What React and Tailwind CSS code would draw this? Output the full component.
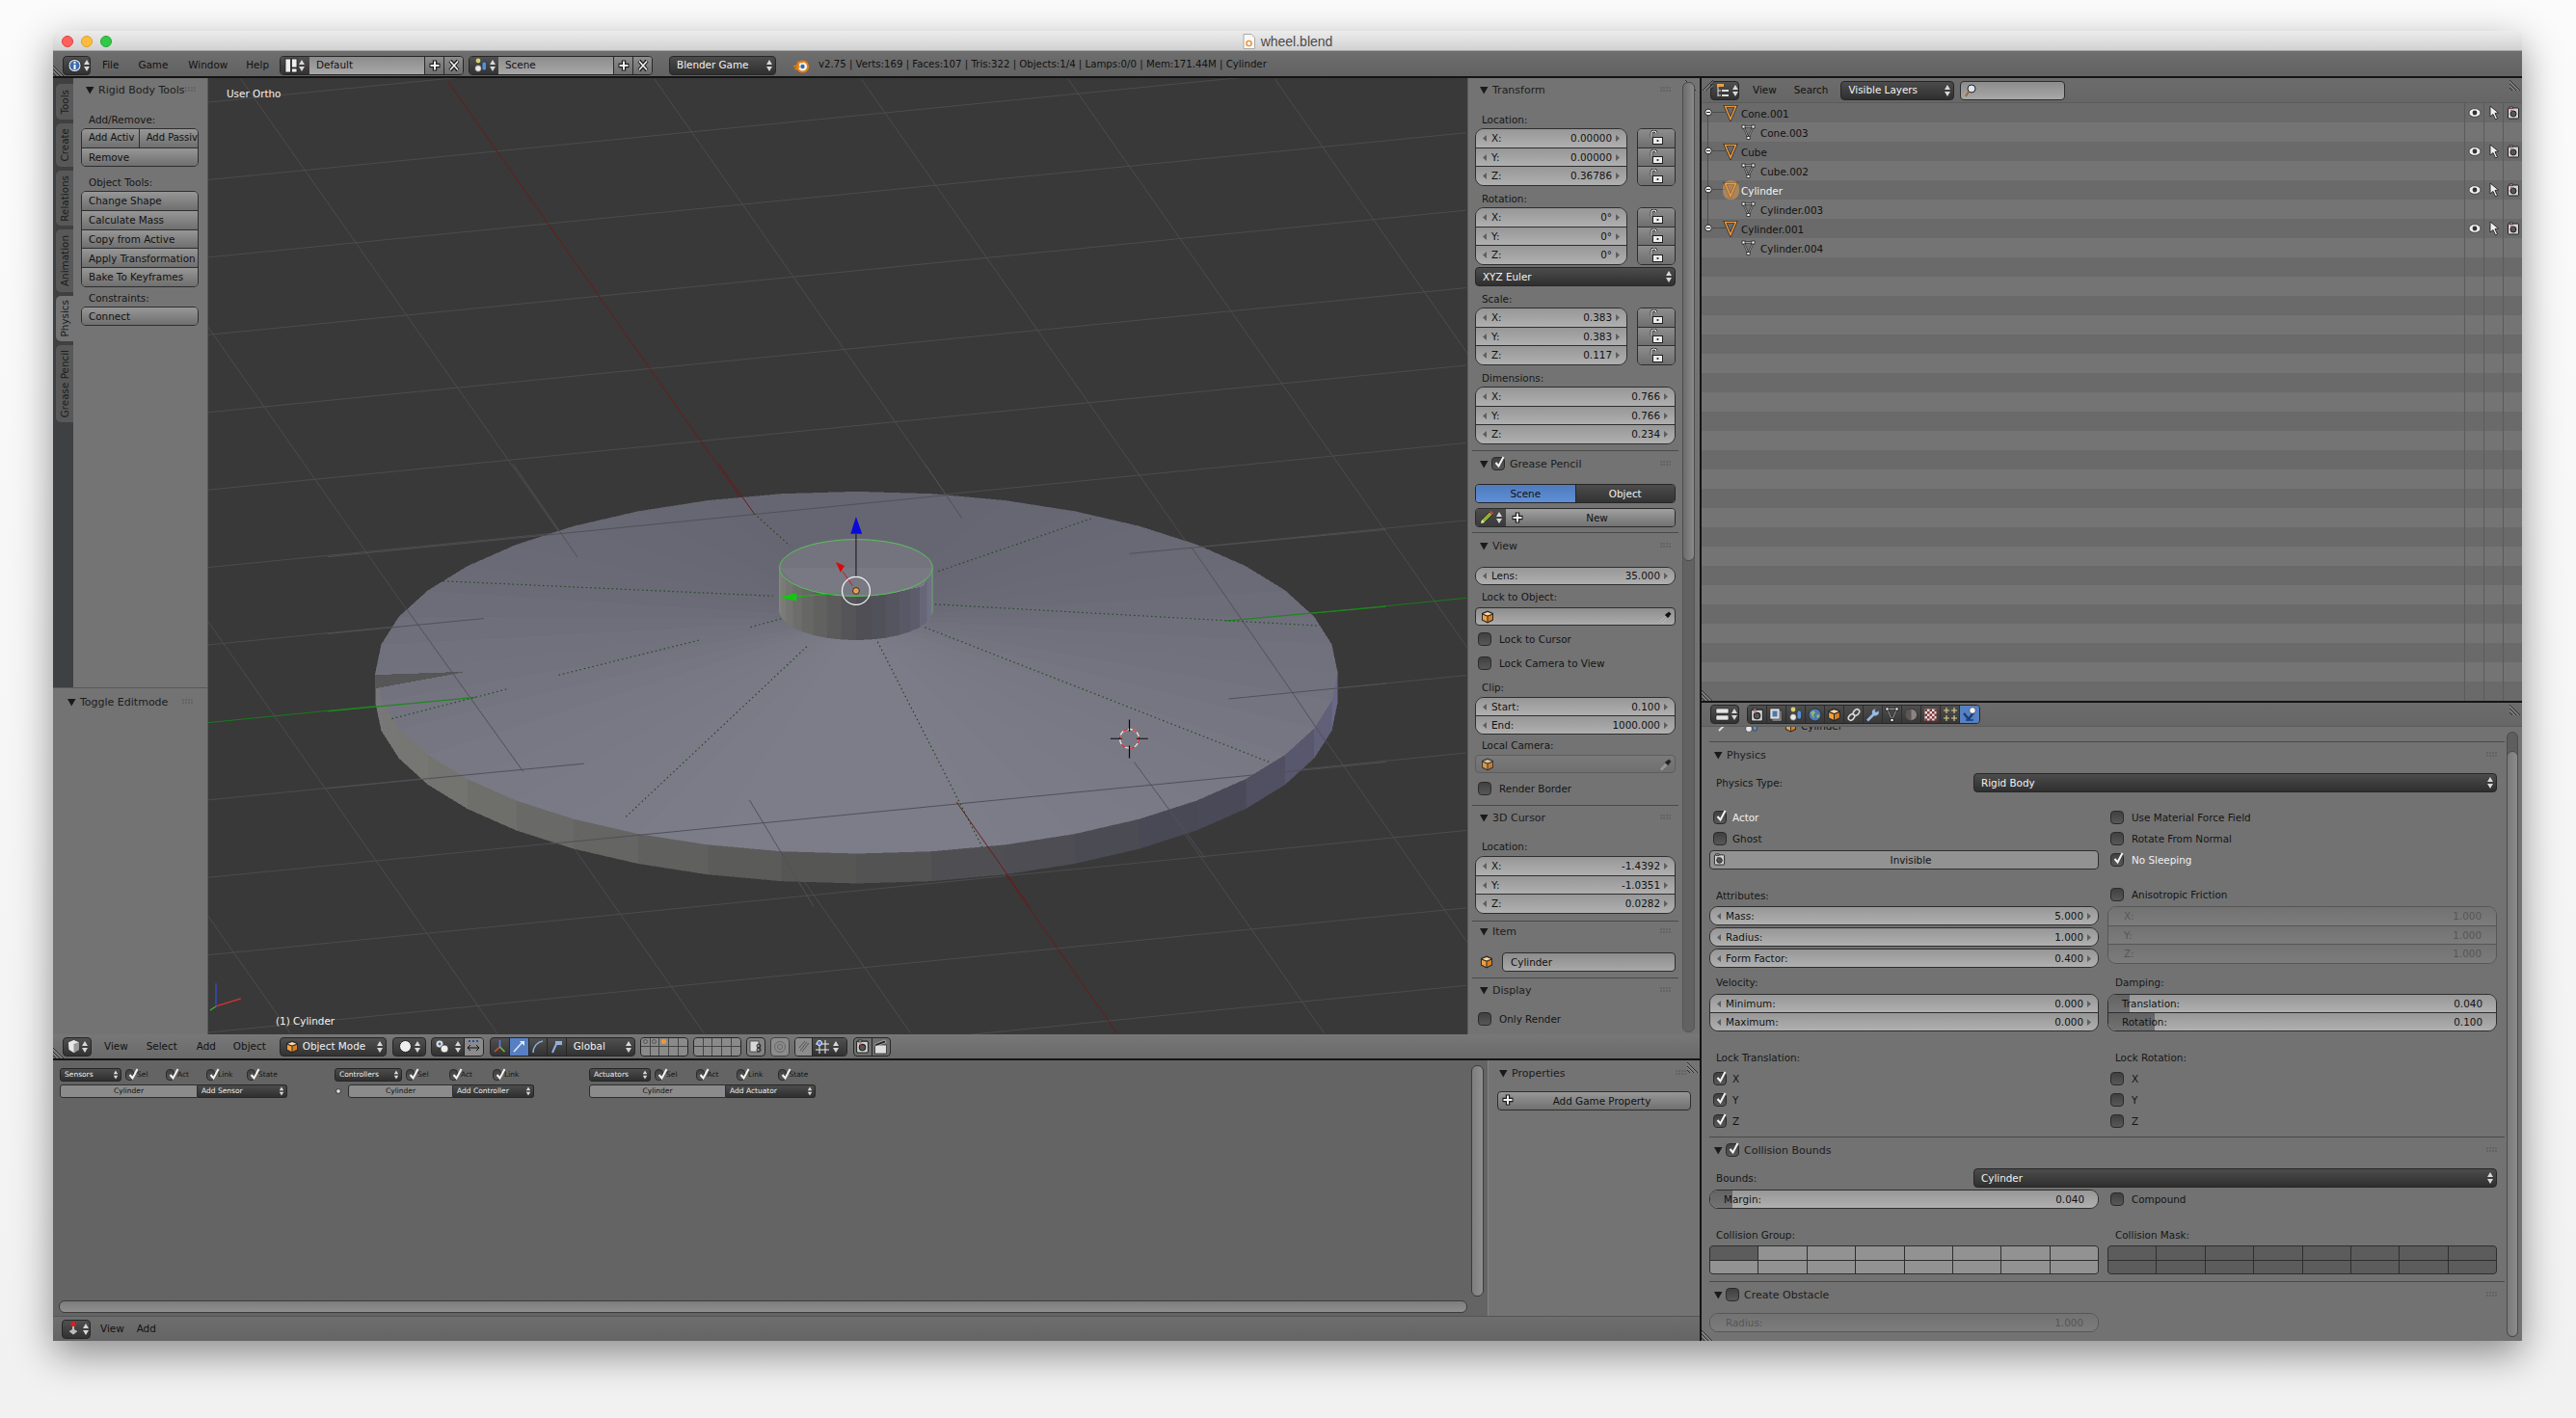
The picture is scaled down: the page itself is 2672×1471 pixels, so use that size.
import React from 'react';

// small drawn glyphs
const Tri = () => (
  <svg className="w-[9px] h-[9px] shrink-0" viewBox="0 0 9 9"><polygon points="0,1 8.5,1 4.2,8.5" fill="#1a1a1a" /></svg>
);
const Grip = ({ className = '' }) => (
  <svg className={`w-[11px] h-[6px] shrink-0 ${className}`} viewBox="0 0 11 6" fill="#3a3a3a">
    {[0.5, 3.5, 6.5, 9.5].map(x => [0.5, 3.5].map(y => <rect key={x + '-' + y} x={x} y={y} width="1" height="1" />))}
  </svg>
);
const UpDown = ({ fill = '#d8d8d8', className = '' }) => (
  <svg className={`w-[6px] h-[14px] shrink-0 ${className}`} viewBox="0 0 6 14" fill={fill}>
    <polygon points="3,1 6,6 0,6" /><polygon points="0,8 6,8 3,13" />
  </svg>
);
const LArrow = ({ fill = '#5e5e5e' }) => <svg className="w-[4px] h-[7px] shrink-0" viewBox="0 0 4 7"><polygon points="4,0 4,7 0,3.5" fill={fill} /></svg>;
const RArrow = ({ fill = '#5e5e5e' }) => <svg className="w-[4px] h-[7px] shrink-0" viewBox="0 0 4 7"><polygon points="0,0 0,7 4,3.5" fill={fill} /></svg>;

const Lock = () => (
  <svg className="w-[16px] h-[16px]" viewBox="0 0 16 16">
    <path d="M3 7V3.5C3 1.8 4 1 5.5 1S8 2 8 3.5" fill="none" stroke="#1c1c1c" strokeWidth="2.6" />
    <path d="M3 7V3.5C3 1.8 4 1 5.5 1S8 2 8 3.5" fill="none" stroke="#f2f2f2" strokeWidth="1.2" />
    <rect x="4.5" y="7.5" width="10" height="7" fill="#ececec" stroke="#222" />
    <rect x="8.6" y="10" width="1.8" height="2" fill="#333" />
  </svg>
);
const Plus = ({ size = 14 }) => (
  <svg width={size} height={size} viewBox="0 0 14 14">
    <path d="M7 1.5v11M1.5 7h11" stroke="#1e1e1e" strokeWidth="4.4" />
    <path d="M7 2.5v9M2.5 7h9" stroke="#f2f2f2" strokeWidth="2" />
  </svg>
);
const Cross = () => (
  <svg width="14" height="14" viewBox="0 0 14 14">
    <path d="M3 2l8 10M11 2L3 12" stroke="#1e1e1e" strokeWidth="4" />
    <path d="M3 2.5l8 9M11 2.5l-8 9" stroke="#f0f0f0" strokeWidth="1.6" />
  </svg>
);
const Cube = ({ className = '', size = 14 }) => (
  <svg width={size} height={size} viewBox="0 0 14 14" className={className}>
    <polygon points="7,0.5 13,3 13,10.5 7,13.5 1,10.5 1,3" fill="#2a2a2a" />
    <polygon points="7,2 11.5,3.8 7,5.6 2.5,3.8" fill="#ffd9a0" />
    <polygon points="2,4.8 6.5,6.6 6.5,12 2,9.8" fill="#f0a040" />
    <polygon points="7.5,6.6 12,4.8 12,9.8 7.5,12" fill="#d87f20" />
  </svg>
);
const Dropper = () => (
  <svg width="14" height="14" viewBox="0 0 14 14">
    <path d="M2 12.5l6-6" stroke="#ddd" strokeWidth="2" />
    <path d="M2 12.5l6-6" stroke="#333" strokeWidth="0.8" />
    <path d="M7 4l3 3M9 2.5l2.5 2.5" stroke="#111" strokeWidth="3" />
  </svg>
);
const Pencil = () => (
  <svg width="16" height="16" viewBox="0 0 16 16">
    <path d="M2 14l1-4 8-8 3 3-8 8z" fill="#8fae3a" stroke="#1f1f1f" strokeWidth="0.8" />
    <path d="M11 2l3 3 1-1.5L12.5 1z" fill="#d9483a" />
    <path d="M2 14l1-4 3 3z" fill="#f0e6c0" />
  </svg>
);
const MeshOrange = () => (
  <svg width="16" height="18" viewBox="0 0 16 18">
    <path d="M2.5 2.5h11L8 15.5z" fill="none" stroke="#2b2b2b" strokeWidth="3" />
    <path d="M2.5 2.5h11L8 15.5z" fill="none" stroke="#ef9a3c" strokeWidth="1.5" />
  </svg>
);
const MeshData = ({ className = '' }) => (
  <svg width="15" height="16" viewBox="0 0 15 16" className={className}>
    <path d="M2.5 2.5h10L7.5 14z" fill="none" stroke="#2b2b2b" strokeWidth="2" />
    <path d="M2.5 2.5h10L7.5 14z" fill="none" stroke="#cfcfcf" strokeWidth="0.7" />
    {[[2.5, 2.5], [12.5, 2.5], [7.5, 14]].map(([x, y]) => (
      <rect key={x} x={x - 1.5} y={y - 1.5} width="3" height="3" fill="#fff" stroke="#111" strokeWidth="0.7" />
    ))}
  </svg>
);
const Eye = () => (
  <svg width="14" height="12" viewBox="0 0 14 12">
    <ellipse cx="7" cy="6" rx="6" ry="4.4" fill="#eee" stroke="#333" strokeWidth="0.8" />
    <circle cx="7" cy="6" r="2.4" fill="#333" />
  </svg>
);
const Cursor = () => (
  <svg width="12" height="16" viewBox="0 0 12 16">
    <polygon points="2,1 2,12 5,9.5 7.5,15 9.5,14 7,8.5 10.5,8" fill="#eee" stroke="#222" strokeWidth="0.9" />
  </svg>
);
const Cam = ({ size = 14 }) => (
  <svg width={size} height={size} viewBox="0 0 14 14">
    <rect x="1.5" y="2" width="11" height="11" rx="1" fill="#d0d0d0" stroke="#222" />
    <rect x="3" y="0.8" width="3.5" height="2" fill="#888" stroke="#222" strokeWidth="0.6" />
    <circle cx="7" cy="8" r="3" fill="#555" stroke="#222" />
    <circle cx="5" cy="5" r="1" fill="#d94040" />
  </svg>
);

const BlenderLogo = () => (
  <svg width="18" height="18" viewBox="0 0 18 18">
    <circle cx="10.5" cy="10" r="5.6" fill="#f2f2f2" stroke="#e87d0d" strokeWidth="2" />
    <circle cx="10.5" cy="10" r="2.2" fill="#2e6bb5" />
    <path d="M1 10l6-1.5M2.5 13l5-3M5 5.5l6 0" stroke="#e87d0d" strokeWidth="1.6" />
  </svg>
);

const Scene3 = () => (
  <svg width="16" height="16" viewBox="0 0 16 16">
    <circle cx="5" cy="3" r="2.4" fill="#d8d070" />
    <circle cx="5" cy="11" r="3.4" fill="#e8e8e8" stroke="#222" strokeWidth="0.6" />
    <rect x="9" y="4" width="4.5" height="9" rx="2" fill="#5a8ed0" stroke="#222" strokeWidth="0.6" />
  </svg>
);

// one group of joined number rows
const NumGroup = ({ rows, h = 'h-[60px]', disabled = false, className = '' }) => (
  <div className={`flex flex-col rounded-[9px] border overflow-hidden ${h} ${disabled ? 'border-[#565656] text-[#565656]' : 'border-[#2e2e2e] text-[#111]'} ${className}`}>
    {rows.map(([label, value]) => (
      <div key={label} className={`flex flex-1 items-center px-[7px] border-b last:border-b-0 ${disabled ? 'border-[#565656] bg-linear-to-b from-[#727272] to-[#7c7c7c]' : 'border-[#2e2e2e] bg-linear-to-b from-[#979797] to-[#b0b0b0]'}`}>
        {disabled ? <span className="w-[4px]" /> : <LArrow />}
        <span className="ml-[5px]">{label}</span>
        <span className="ml-auto mr-[4px]">{value}</span>
        {disabled ? <span className="w-[4px]" /> : <RArrow />}
      </div>
    ))}
  </div>
);

const LockCol = ({ n = 3 }) => (
  <div className="flex flex-col w-[40px] h-[60px] rounded-[5px] border border-[#2e2e2e] overflow-hidden">
    {Array.from({ length: n }).map((_, i) => (
      <div key={i} className="flex flex-1 items-center justify-center border-b border-[#2e2e2e] last:border-b-0 bg-linear-to-b from-[#8d8d8d] to-[#6f6f6f]"><Lock /></div>
    ))}
  </div>
);

const Label = ({ children, className = '' }) => <div className={`h-[14px] leading-[14px] text-[#161616] ${className}`}>{children}</div>;

const Check = ({ on = false, size = 'w-[14px] h-[14px]' }) => (
  <span className={`relative block shrink-0 rounded-[4px] border border-[#2a2a2a] bg-linear-to-b from-[#404040] to-[#585858] ${size}`}>
    {on && (
      <svg className="absolute left-[1px] -top-[3px]" width="13" height="15" viewBox="0 0 13 15">
        <path d="M2.5 8l3 3.5L10.5 2" fill="none" stroke="#f4f4f4" strokeWidth="2" />
      </svg>
    )}
  </span>
);
const CheckRow = ({ on, children, className = '', white = false, gap = 'gap-[8px]' }) => (
  <div className={`flex items-center h-[14px] ${gap} ${className}`}>
    <Check on={on} />
    <span className={white ? 'text-[#f0f0f0]' : 'text-[#141414]'}>{children}</span>
  </div>
);

const PanelHead = ({ title, check, on, className = '' }) => (
  <div className={`flex items-center h-[16px] pl-[5px] pr-[5px] ${className}`}>
    <Tri />
    {check && <span className="ml-[3px]"><Check on={on} /></span>}
    <span className={`text-[11px] text-[#1c1c1c] whitespace-nowrap ${check ? 'ml-[5px]' : 'ml-[4px]'}`}>{title}</span>
    <Grip className="ml-auto" />
  </div>
);
const Sep = ({ className = '' }) => <div className={`h-[2px] border-t border-[#4a4a4a] border-b-[#7e7e7e] ${className}`} />;

const Menu = ({ children, className = '' }) => (
  <div className={`flex items-center justify-between h-[20px] rounded-[4px] border border-[#262626] bg-linear-to-b from-[#4c4c4c] to-[#2f2f2f] pl-[7px] pr-[3px] text-[#f2f2f2] ${className}`}>
    <span>{children}</span><UpDown />
  </div>
);
const Btn = ({ children, className = '' }) => (
  <div className={`flex flex-1 items-center pl-[7px] text-[#111] whitespace-nowrap border-b border-[#2e2e2e] last:border-b-0 bg-linear-to-b from-[#979797] to-[#6f6f6f] ${className}`}>{children}</div>
);
const ObjField = ({ dim = false }) => (
  <div className={`flex items-center justify-between h-[19px] rounded-[4px] border pl-[5px] pr-[2px] bg-linear-to-b ${dim ? 'border-[#585858] from-[#7c7c7c] to-[#6f6f6f] opacity-80' : 'border-[#2e2e2e] from-[#8e8e8e] to-[#acacac]'}`}>
    <Cube /><Dropper />
  </div>
);

const Hatch = ({ className = '' }) => (
  <svg className={`absolute ${className}`} width="13" height="13" viewBox="0 0 13 13">
    <path d="M0 2l11 11M0 6l7 7M0 10l3 3" stroke="#2c2c2c" strokeWidth="1" />
    <path d="M0 3.2L9.8 13M0 7.2L5.8 13" stroke="#9a9a9a" strokeWidth="0.8" />
  </svg>
);

const IconGroup = ({ children, className = '' }) => (
  <div className={`flex items-center h-[20px] rounded-[4px] border border-[#262626] bg-linear-to-b from-[#505050] to-[#323232] ${className}`}>{children}</div>
);

const PickerGroup = ({ name, icon, className = '' }) => (
  <div className={`flex items-stretch w-[191px] h-[20px] rounded-[4px] border border-[#262626] overflow-hidden ${className}`}>
    <div className="flex items-center gap-[1px] w-[30px] pl-[4px] bg-linear-to-b from-[#505050] to-[#323232]">{icon}<UpDown /></div>
    <div className="flex items-center flex-1 pl-[7px] text-[#111] bg-linear-to-b from-[#8c8c8c] to-[#a8a8a8]">{name}</div>
    <div className="flex items-center justify-center w-[20px] border-l border-[#2a2a2a] bg-linear-to-b from-[#8c8c8c] to-[#6f6f6f]"><Plus /></div>
    <div className="flex items-center justify-center w-[20px] border-l border-[#2a2a2a] bg-linear-to-b from-[#8c8c8c] to-[#6f6f6f]"><Cross /></div>
  </div>
);

// header of the top window bar
const InfoHeader = () => (
  <div className="relative flex items-center h-[28px] shrink-0 border-b-[2px] border-[#141414] bg-linear-to-b from-[#6e6e6e] to-[#626262] pl-[10px] pt-[3px]">
    <Hatch className="left-0 bottom-0" />
    <IconGroup className="w-[29px] pl-[4px] gap-[2px]">
      <svg width="15" height="16" viewBox="0 0 15 16"><circle cx="7.5" cy="8" r="6.6" fill="#f0f0f0" stroke="#222" /><circle cx="7.5" cy="8" r="5" fill="#3a6cb0" /><rect x="6.5" y="7" width="2" height="5" fill="#fff" /><rect x="6.5" y="4" width="2" height="2" fill="#fff" /></svg>
      <UpDown />
    </IconGroup>
    {[['File', 'ml-[12px]'], ['Game', 'ml-[20px]'], ['Window', 'ml-[21px]'], ['Help', 'ml-[19px]']].map(([t, c]) => (
      <span key={t} className={`text-[#111] ${c}`}>{t}</span>
    ))}
    <PickerGroup name="Default" icon={<svg width="14" height="16" viewBox="0 0 14 16"><rect x="1" y="1" width="5.5" height="14" fill="#eee" stroke="#222" strokeWidth="0.8" /><rect x="7.5" y="1" width="5.5" height="9" fill="#eee" stroke="#222" strokeWidth="0.8" /><rect x="7.5" y="11" width="5.5" height="4" fill="#eee" stroke="#222" strokeWidth="0.8" /></svg>} className="ml-[11px]" />
    <PickerGroup name="Scene" icon={<Scene3 />} className="ml-[5px]" />
    <Menu className="w-[111px] ml-[17px]">Blender Game</Menu>
    <span className="ml-[17px]"><BlenderLogo /></span>
    <span className="ml-[9px] text-[#111] text-[10.2px] whitespace-pre">v2.75 | Verts:169 | Faces:107 | Tris:322 | Objects:1/4 | Lamps:0/0 | Mem:171.44M | Cylinder</span>
  </div>
);

const ToolTabs = () => {
  const tabs = [['Tools', 'h-[37px]'], ['Create', 'h-[45px]'], ['Relations', 'h-[57px]'], ['Animation', 'h-[65px]'], ['Physics', 'h-[47px]', true], ['Grease Pencil', 'h-[80px]']];
  return (
    <div className="flex flex-col items-end gap-[4px] w-[21px] pt-[6px] pl-[3px] bg-[#3f4042]">
      {tabs.map(([t, h, active]) => (
        <div key={t} className={`flex items-center justify-center w-[18px] rounded-l-[5px] ${h} ${active ? 'bg-[#747474]' : 'bg-[#585858]'}`}>
          <span className="[writing-mode:vertical-rl] rotate-180 text-[#1c1c1c] whitespace-nowrap">{t}</span>
        </div>
      ))}
    </div>
  );
};

const ToolPanel = () => (
  <div className="flex flex-1 flex-col min-w-0 bg-[#747474] pl-[8px] pr-[9px] pt-[4px] border-r border-[#5a5a5a]">
    <PanelHead title="Rigid Body Tools" className="pr-0" />
    <Label className="mt-[16px] ml-[8px]">Add/Remove:</Label>
    <div className="flex flex-col h-[40px] mt-[2px] rounded-[5px] border border-[#2e2e2e] overflow-hidden">
      <div className="flex flex-1 border-b border-[#2e2e2e]">
        <Btn className="border-b-0 border-r border-r-[#2e2e2e] pl-[6px] text-[10px]">Add Activ</Btn>
        <Btn className="border-b-0 pl-[4px] text-[10px]">Add Passiv</Btn>
      </div>
      <Btn>Remove</Btn>
    </div>
    <Label className="mt-[9px] ml-[8px]">Object Tools:</Label>
    <div className="flex flex-col h-[100px] mt-[2px] rounded-[5px] border border-[#2e2e2e] overflow-hidden">
      {['Change Shape', 'Calculate Mass', 'Copy from Active', 'Apply Transformation', 'Bake To Keyframes'].map(t => <Btn key={t}>{t}</Btn>)}
    </div>
    <Label className="mt-[4px] ml-[8px]">Constraints:</Label>
    <div className="flex flex-col h-[20px] mt-[2px] rounded-[5px] border border-[#2e2e2e] overflow-hidden"><Btn>Connect</Btn></div>
  </div>
);

const NPanel = () => (
  <div className="relative flex flex-col w-[241px] shrink-0 bg-[#737373] border-l border-[#5c5c5c]">
    <Hatch className="right-[2px] top-0" />
    <div className="absolute right-[5px] top-[4px] bottom-[2px] w-[13px] rounded-[6px] bg-[#626262] border border-[#555]" />
    <div className="absolute right-[5px] top-[4px] h-[497px] w-[13px] rounded-[6px] bg-linear-to-r from-[#6c6c6c] to-[#8a8a8a] border border-[#4c4c4c]" />
    <div className="flex flex-col w-[215px] pl-[7px] pt-[4px]">
      <PanelHead title="Transform" />
      <Label className="mt-[16px] ml-[7px]">Location:</Label>
      <div className="flex justify-between mt-[2px]">
        <NumGroup className="w-[158px]" rows={[['X:', '0.00000'], ['Y:', '0.00000'], ['Z:', '0.36786']]} />
        <LockCol />
      </div>
      <Label className="mt-[6px] ml-[7px]">Rotation:</Label>
      <div className="flex justify-between mt-[2px]">
        <NumGroup className="w-[158px]" rows={[['X:', '0°'], ['Y:', '0°'], ['Z:', '0°']]} />
        <LockCol />
      </div>
      <Menu className="mt-[2px]">XYZ Euler</Menu>
      <Label className="mt-[6px] ml-[7px]">Scale:</Label>
      <div className="flex justify-between mt-[2px]">
        <NumGroup className="w-[158px]" rows={[['X:', '0.383'], ['Y:', '0.383'], ['Z:', '0.117']]} />
        <LockCol />
      </div>
      <Label className="mt-[6px] ml-[7px]">Dimensions:</Label>
      <NumGroup className="mt-[2px]" rows={[['X:', '0.766'], ['Y:', '0.766'], ['Z:', '0.234']]} />
      <Sep className="mt-[6px] -mx-[3px]" />
      <PanelHead title="Grease Pencil" check on className="mt-[4px]" />
      <div className="flex mt-[13px] h-[20px] rounded-[4px] border border-[#262626] overflow-hidden">
        <div className="flex flex-1 items-center justify-center border-r border-[#262626] bg-linear-to-b from-[#4f7bbd] to-[#5f8fd8] text-[#111]">Scene</div>
        <div className="flex flex-1 items-center justify-center bg-linear-to-b from-[#4c4c4c] to-[#333] text-[#f0f0f0]">Object</div>
      </div>
      <div className="flex mt-[5px] h-[20px] rounded-[4px] border border-[#2a2a2a] overflow-hidden">
        <div className="flex items-center gap-[2px] w-[31px] pl-[3px] bg-linear-to-b from-[#4c4c4c] to-[#3a3a3a]"><Pencil /><UpDown /></div>
        <div className="relative flex flex-1 items-center justify-center bg-linear-to-b from-[#a0a0a0] to-[#727272] text-[#111] pl-[14px]">
          <span className="absolute left-[5px] top-[2px]"><Plus /></span>New
        </div>
      </div>
      <Sep className="mt-[5px] -mx-[3px]" />
      <PanelHead title="View" className="mt-[4px]" />
      <NumGroup className="mt-[14px]" h="h-[19px]" rows={[['Lens:', '35.000']]} />
      <Label className="mt-[5px] ml-[7px]">Lock to Object:</Label>
      <div className="mt-[4px]"><ObjField /></div>
      <CheckRow className="mt-[7px] ml-[3px]">Lock to Cursor</CheckRow>
      <CheckRow className="mt-[11px] ml-[3px]">Lock Camera to View</CheckRow>
      <Label className="mt-[11px] ml-[7px]">Clip:</Label>
      <NumGroup className="mt-[3px]" h="h-[39px]" rows={[['Start:', '0.100'], ['End:', '1000.000']]} />
      <Label className="mt-[4px] ml-[7px] text-[#555]">Local Camera:</Label>
      <div className="mt-[3px]"><ObjField dim /></div>
      <CheckRow className="mt-[9px] ml-[3px]">Render Border</CheckRow>
      <Sep className="mt-[10px] -mx-[3px]" />
      <PanelHead title="3D Cursor" className="mt-[3px]" />
      <Label className="mt-[15px] ml-[7px]">Location:</Label>
      <NumGroup className="mt-[3px]" rows={[['X:', '-1.4392'], ['Y:', '-1.0351'], ['Z:', '0.0282']]} />
      <Sep className="mt-[7px] -mx-[3px]" />
      <PanelHead title="Item" className="mt-[1px]" />
      <div className="flex items-center mt-[14px]">
        <Cube className="ml-[5px]" />
        <div className="flex items-center flex-1 h-[20px] ml-[9px] pl-[8px] rounded-[4px] border border-[#2e2e2e] bg-linear-to-b from-[#8c8c8c] to-[#a8a8a8] text-[#111]">Cylinder</div>
      </div>
      <Sep className="mt-[6px] -mx-[3px]" />
      <PanelHead title="Display" className="mt-[3px]" />
      <CheckRow className="mt-[15px] ml-[3px]">Only Render</CheckRow>
    </div>
  </div>
);

// viewport drawing helpers: Z maps the coordinates measured on the mesh crop
const Z = (X, Y) => [340 + X / 1.425, 480 + Y / 3];
const seg = (a, b, c, d) => { const [x1, y1] = Z(a, b); const [x2, y2] = Z(c, d); return { x1, y1, x2, y2 }; };
const lerp = (a, b, t) => a.map((v, i) => Math.round(v + (b[i] - v) * t));
const rgb = c => `rgb(${c[0]},${c[1]},${c[2]})`;
const stops = (list, t) => {
  for (let i = 0; i < list.length - 1; i++) {
    if (t <= list[i + 1][0]) return lerp(list[i][1], list[i + 1][1], (t - list[i][0]) / (list[i + 1][0] - list[i][0]));
  }
  return list[list.length - 1][1];
};
const sideStops = [[0, [105, 105, 134]], [0.1, [88, 88, 110]], [0.22, [72, 72, 86]], [0.4, [78, 78, 82]], [0.55, [88, 88, 86]], [0.72, [104, 104, 102]], [0.88, [118, 118, 114]], [1, [120, 120, 122]]];
const hubStops = [[0, [122, 122, 144]], [0.2, [92, 92, 108]], [0.45, [78, 78, 84]], [0.7, [100, 100, 98]], [1, [128, 128, 124]]];

const ViewportArt = () => {
  const cx = 890, cy = 697, rx = 500, ry = 188, drop = 31, n = 40;
  const pt = a => [cx + rx * Math.cos(a), cy + ry * Math.sin(a)];
  const wedges = Array.from({ length: n }).map((_, i) => {
    const a = (i / n) * Math.PI * 2, b = ((i + 1) / n) * Math.PI * 2;
    const [p, q] = [pt(a), pt(b)];
    const s = (Math.sin((a + b) / 2) + 1) / 2;
    const c = lerp([102, 102, 114], [125, 125, 137], s);
    return <polygon key={i} points={`890,640 ${p} ${q}`} fill={rgb(c)} stroke={rgb(c)} strokeWidth="0.5" />;
  });
  const side = Array.from({ length: n / 2 }).map((_, i) => {
    const a = (i / (n / 2)) * Math.PI, b = ((i + 1) / (n / 2)) * Math.PI;
    const [p, q] = [pt(a), pt(b)];
    const c = rgb(stops(sideStops, i / (n / 2 - 1)));
    return <polygon key={i} points={`${p} ${q} ${q[0]},${q[1] + drop} ${p[0]},${p[1] + drop}`} fill={c} stroke={c} strokeWidth="0.5" />;
  });
  const hub = Array.from({ length: 16 }).map((_, i) => {
    const a = (i / 16) * Math.PI, b = ((i + 1) / 16) * Math.PI;
    const x1 = 889.5 + 79.5 * Math.cos(a), x2 = 889.5 + 79.5 * Math.cos(b);
    const y1 = 588 + 30 * Math.sin(a), y2 = 588 + 30 * Math.sin(b);
    const c = rgb(stops(hubStops, i / 15));
    return <polygon key={i} points={`${x1},${y1} ${x2},${y2} ${x2},${y2 + 45} ${x1},${y1 + 45}`} fill={c} stroke={c} strokeWidth="0.5" />;
  });
  const gridA = Array.from({ length: 18 }).map((_, k) => {
    const y = 104 + 80.6 * (k - 2);
    if (k - 2 === 8) return null;
    return <line key={k} x1="216" y1={y} x2="1524" y2={y - 0.099 * 1308} />;
  });
  const gridB = Array.from({ length: 16 }).map((_, k) => {
    const x = 465 + 215 * (k - 9);
    if (k - 9 === 0) return null;
    return <line key={k} x1={x} y1="80" x2={x + 0.702 * 992} y2="1072" />;
  });
  const overA = [[0, 290, 920, 97], [1188, 280, 1568, 205], [0, 530, 232, 482], [1335, 733, 1568, 685], [0, 1012, 380, 935], [330, 1185, 1568, 930]];
  const overB = [[275, 0, 370, 290], [885, 0, 940, 170], [118, 455, 290, 960], [1280, 260, 1430, 715], [625, 1048, 720, 1380], [1195, 930, 1300, 1230], [1430, 715, 1480, 870]];
  const dotted = [[165, 365, 660, 412], [900, 438, 1470, 505], [905, 335, 1135, 168], [672, 483, 625, 510], [550, 550, 340, 660], [265, 703, 95, 795], [885, 510, 1395, 930], [815, 555, 970, 1195], [710, 570, 440, 1105], [632, 155, 685, 255]];
  const [bc1, bc2, bc3] = [Z(783, 165), Z(792, 218), Z(775, 218)];
  const [gc1, gc2, gc3] = [Z(668, 416), Z(695, 403), Z(695, 428)];
  const [rc1, rc2, rc3] = [Z(753, 306), Z(766, 318), Z(760, 338)];
  return (
    <svg className="absolute inset-0 w-full h-full" viewBox="216 80 1309 992">
      <g stroke="#4c4c4c" strokeWidth="1">{gridA}{gridB}</g>
      <line x1="216" y1="749" x2="1524" y2="619.5" stroke="#1a7a1a" strokeWidth="1" />
      <line x1="465" y1="82" x2="1161" y2="1072" stroke="#6a1a1a" strokeWidth="1" />
      <g shapeRendering="crispEdges">
        {side}
        {wedges}
        <polygon points={`${Z(72, 658)} ${Z(207, 648)} ${Z(72, 700)}`} fill="#565658" />
      </g>
      <g stroke="#505058" strokeWidth="1">{overA.concat(overB).map((s, i) => <line key={i} {...seg(...s)} />)}</g>
      <line {...seg(580, 0, 632, 155)} stroke="#6a1a1a" strokeWidth="1" />
      <line {...seg(932, 1055, 1040, 1380)} stroke="#6a1a1a" strokeWidth="1" />
      <line {...seg(0, 772, 220, 728)} stroke="#1f861f" strokeWidth="1.2" />
      <line {...seg(1330, 490, 1568, 445)} stroke="#1f861f" strokeWidth="1.2" />
      <g stroke="#1f4a1f" strokeWidth="1.2" strokeDasharray="1.5 3">{dotted.map((s, i) => <line key={i} {...seg(...s)} />)}</g>
      <g shapeRendering="crispEdges">
        {hub}
        <ellipse cx="889.5" cy="588" rx="79.5" ry="30" fill="#74747e" />
        <polygon points="889,588 969,588 960,607 930,614 880,618 830,608 810,588" fill="#797984" />
      </g>
      <ellipse cx="889.5" cy="588" rx="79.5" ry="29.5" fill="none" stroke="#58c058" strokeWidth="1" />
      <line x1="810" y1="588" x2="810" y2="635" stroke="#62a862" strokeWidth="0.7" />
      <line x1="969" y1="588" x2="969" y2="635" stroke="#62a862" strokeWidth="0.7" />
      <line x1="889.5" y1="553" x2="889.5" y2="597" stroke="#111" strokeWidth="1" />
      <polygon points={`${bc1} ${bc2} ${bc3}`} fill="#0a0ad8" />
      <line {...seg(763, 335, 778, 380)} stroke="#cc1515" strokeWidth="1" />
      <polygon points={`${rc1} ${rc2} ${rc3}`} fill="#d80a0a" />
      <line {...seg(695, 414, 760, 403)} stroke="#10c010" strokeWidth="1" />
      <polygon points={`${gc1} ${gc2} ${gc3}`} fill="#10c810" />
      <circle cx="889.5" cy="612" r="14.5" fill="none" stroke="#f4f4f4" strokeWidth="1.2" />
      <circle cx="889.5" cy="612" r="3.4" fill="#e8a050" stroke="#111" strokeWidth="0.8" />
      <circle cx="1173.7" cy="765.7" r="10" fill="none" stroke="#f0f0f0" strokeWidth="1.2" />
      <circle cx="1173.7" cy="765.7" r="10" fill="none" stroke="#d81818" strokeWidth="1.2" strokeDasharray="5 5" />
      <path d="M1173.7 746v12M1173.7 773v13M1154 765.7h12M1181 765.7h12" stroke="#0a0a0a" strokeWidth="1.2" />
      <line x1="224" y1="1044" x2="250" y2="1036" stroke="#e03030" strokeWidth="1.2" />
      <line x1="224" y1="1044" x2="218" y2="1048" stroke="#30c030" strokeWidth="1.2" />
      <line x1="224" y1="1044" x2="224" y2="1020" stroke="#3050e0" strokeWidth="1.2" />
    </svg>
  );
};

const LayerGrid = ({ className = '', dots = false }) => (
  <div className={`grid grid-cols-5 grid-rows-2 w-[50px] h-[20px] rounded-[4px] border border-[#262626] bg-[#454545] gap-px overflow-hidden ${className}`}>
    {Array.from({ length: 10 }).map((_, i) => (
      <span key={i} className="flex items-center justify-center bg-[#8a8a8a]">
        {dots && i < 2 && <span className="block w-[5px] h-[5px] rounded-full border border-[#555]" />}
        {dots && i === 2 && <span className="block w-[5px] h-[5px] rounded-full bg-[#f09a30]" />}
      </span>
    ))}
  </div>
);

const ViewportHeader = () => (
  <div className="relative flex items-center h-[27px] shrink-0 border-b-[2px] border-[#141414] bg-linear-to-b from-[#777] to-[#6a6a6a] pl-[10px]">
    <Hatch className="left-0 bottom-0" />
    <IconGroup className="w-[30px] justify-center gap-[2px]">
      <svg width="13" height="15" viewBox="0 0 13 15"><polygon points="6.5,0.5 12.5,3 12,11 6.5,14.5 1,11 0.5,3" fill="#e8e8e8" stroke="#222" strokeWidth="0.7" /><polygon points="6.5,5 12,3 12,11 6.5,14" fill="#999" /></svg><UpDown />
    </IconGroup>
    {[['View', 'ml-[13px]'], ['Select', 'ml-[19px]'], ['Add', 'ml-[20px]'], ['Object', 'ml-[18px]']].map(([t, c]) => <span key={t} className={`text-[#111] ${c}`}>{t}</span>)}
    <IconGroup className="w-[111px] ml-[14px] pl-[5px] pr-[3px] gap-[4px] text-[#f2f2f2]"><Cube />Object Mode<UpDown className="ml-auto" /></IconGroup>
    <IconGroup className="w-[35px] ml-[6px] pl-[6px] gap-[3px]"><span className="block w-[13px] h-[13px] rounded-full bg-[#eeeeee] border border-[#222]" /><UpDown /></IconGroup>
    <IconGroup className="w-[55px] ml-[5px] pl-[3px] overflow-hidden">
      <svg width="16" height="16" viewBox="0 0 16 16"><circle cx="5" cy="5" r="4" fill="#ddd" stroke="#222" strokeWidth="0.6" /><circle cx="10" cy="10" r="4" fill="#eee" stroke="#222" strokeWidth="0.6" /><circle cx="5" cy="5" r="1.4" fill="#3a6cb0" /></svg>
      <UpDown className="ml-[5px]" />
      <span className="flex items-center justify-center flex-1 ml-[3px] h-full bg-[#8b8b8b] border-l border-[#262626]">
        <svg width="16" height="15" viewBox="0 0 16 15"><path d="M3 2h2M7 2h2M11 2h2" stroke="#2a50a0" strokeWidth="2" /><path d="M2 9h12M2 9l3-3M2 9l3 3M14 9l-3-3M14 9l-3 3" stroke="#111" fill="none" /></svg>
      </span>
    </IconGroup>
    <div className="flex items-stretch w-[151px] h-[20px] ml-[6px] rounded-[4px] border border-[#262626] overflow-hidden bg-linear-to-b from-[#505050] to-[#323232]">
      <span className="flex items-center justify-center w-[20px] border-r border-[#262626]"><svg width="15" height="15" viewBox="0 0 15 15"><path d="M7.5 8V1" stroke="#5a7ce8" strokeWidth="1.6" /><path d="M7.5 8L2 13" stroke="#e04848" strokeWidth="1.6" /><path d="M7.5 8l5 5" stroke="#70c030" strokeWidth="1.6" /></svg></span>
      <span className="flex items-center justify-center w-[20px] border-r border-[#262626] bg-[#5680c2]"><svg width="15" height="15" viewBox="0 0 15 15"><path d="M2 13L11 3" stroke="#dfe8f8" strokeWidth="1.5" /><path d="M8 2h5v5z" fill="#dfe8f8" /></svg></span>
      <span className="flex items-center justify-center w-[19px] border-r border-[#262626]"><svg width="15" height="15" viewBox="0 0 15 15"><path d="M3 14C3 8 7 3 13 2" fill="none" stroke="#8fb0e0" strokeWidth="1.5" /></svg></span>
      <span className="flex items-center justify-center w-[20px] border-r border-[#262626]"><svg width="15" height="15" viewBox="0 0 15 15"><path d="M3 14L7 5" stroke="#8fb0e0" strokeWidth="2" /><rect x="6" y="2" width="7" height="4" fill="#8fb0e0" /></svg></span>
      <span className="flex items-center justify-between flex-1 pl-[7px] pr-[3px] text-[#f2f2f2]">Global<UpDown /></span>
    </div>
    <LayerGrid className="ml-[5px]" dots />
    <LayerGrid className="ml-[5px]" />
    <span className="flex items-center justify-center w-[20px] h-[20px] ml-[5px] rounded-[4px] border border-[#262626] bg-[#838383]"><svg width="14" height="15" viewBox="0 0 14 15"><rect x="1" y="2" width="9" height="11" fill="#d8d8d8" stroke="#333" strokeWidth="0.7" /><circle cx="10" cy="7" r="2" fill="none" stroke="#222" /><circle cx="10" cy="11" r="2" fill="none" stroke="#222" /></svg></span>
    <span className="flex items-center justify-center w-[20px] h-[20px] ml-[5px] rounded-[4px] border border-[#444] bg-[#8c8c8c]"><svg width="14" height="14" viewBox="0 0 14 14"><circle cx="7" cy="7" r="5.5" fill="none" stroke="#666" /><circle cx="7" cy="7" r="2.5" fill="none" stroke="#666" /></svg></span>
    <div className="flex items-stretch w-[55px] h-[20px] ml-[5px] rounded-[4px] border border-[#262626] overflow-hidden">
      <span className="flex items-center justify-center w-[18px] bg-[#8c8c8c] border-r border-[#262626]"><svg width="13" height="15" viewBox="0 0 13 15"><path d="M3 12L10 3M5 13l7-9M2 9l6-7" stroke="#555" fill="none" /></svg></span>
      <span className="flex items-center flex-1 gap-[3px] pl-[2px] bg-linear-to-b from-[#505050] to-[#323232]"><svg width="16" height="16" viewBox="0 0 16 16"><path d="M1 5h14M1 11h14M5 1v14M11 1v14" stroke="#eee" /><circle cx="5" cy="4" r="2.5" fill="#4a78d0" stroke="#eee" /></svg><UpDown /></span>
    </div>
    <div className="flex items-stretch w-[39px] h-[20px] ml-[6px] rounded-[4px] border border-[#262626] overflow-hidden bg-[#6e6e6e]">
      <span className="flex items-center justify-center flex-1 border-r border-[#262626]"><Cam size={15} /></span>
      <span className="flex items-center justify-center flex-1"><svg width="15" height="16" viewBox="0 0 15 16"><rect x="1.5" y="6" width="12" height="9" fill="#ddd" stroke="#222" strokeWidth="0.7" /><path d="M1.5 5L12 1l1 2.5-11 4z" fill="#222" stroke="#eee" strokeWidth="0.5" /></svg></span>
    </div>
  </div>
);

const MiniCheck = ({ label, w }) => (
  <div className={`flex items-center gap-[3px] text-[7.5px] text-[#141414] ${w}`}>
    <Check on size="w-[9px] h-[12px]" /><span>{label}</span>
  </div>
);
const LogicCol = ({ name, w, checks, cw, left, add, cylW, addW, dot }) => (
  <div className={`flex flex-col gap-[3px] text-[7.5px] ${left}`}>
    <div className="flex items-center h-[14px]">
      <div className={`flex items-center justify-between h-[14px] rounded-[3px] border border-[#262626] bg-linear-to-b from-[#4c4c4c] to-[#2f2f2f] pl-[4px] pr-[2px] text-[#eee] ${w}`}>
        {name}<UpDown className="scale-75" />
      </div>
      <div className="flex ml-[4px]">{checks.map(c => <MiniCheck key={c} label={c} w={cw} />)}</div>
    </div>
    <div className="flex items-center h-[14px]">
      {dot && <svg className="mr-[7px] ml-[1px]" width="6" height="6" viewBox="0 0 6 6"><circle cx="3" cy="3" r="2.4" fill="#ddd" stroke="#222" strokeWidth="0.8" /></svg>}
      <div className={`flex items-center justify-center h-[14px] rounded-l-[3px] border border-[#2e2e2e] bg-[#8b8b8b] text-[#111] ${cylW}`}>Cylinder</div>
      <div className={`flex items-center justify-between h-[14px] rounded-r-[3px] border border-l-0 border-[#262626] bg-linear-to-b from-[#4c4c4c] to-[#2f2f2f] pl-[4px] pr-[2px] text-[#eee] ${addW}`}>
        {add}<UpDown className="scale-75" />
      </div>
    </div>
  </div>
);

const LogicEditor = () => (
  <div className="relative flex flex-1 min-h-0">
    <div className="relative flex flex-1 bg-[#646464] pt-[8px] pl-[7px]">
      <LogicCol left="w-[285px]" name="Sensors" w="w-[64px]" checks={['Sel', 'Act', 'Link', 'State']} cw="w-[42px]" add="Add Sensor" cylW="w-[143px]" addW="w-[93px]" />
      <LogicCol left="w-[264px]" name="Controllers" w="w-[70px]" checks={['Sel', 'Act', 'Link']} cw="w-[45px]" add="Add Controller" cylW="w-[109px]" addW="w-[84px]" dot />
      <LogicCol left="w-[300px]" name="Actuators" w="w-[64px]" checks={['Sel', 'Act', 'Link', 'State']} cw="w-[42.5px]" add="Add Actuator" cylW="w-[142px]" addW="w-[93px]" />
      <div className="absolute right-[4px] top-[5px] h-[240px] w-[13px] rounded-[6px] border border-[#3c3c3c] bg-linear-to-r from-[#7d7d7d] to-[#8f8f8f]" />
      <div className="absolute left-[6px] bottom-[3px] right-[21px] h-[13px] rounded-[6px] border border-[#3c3c3c] bg-linear-to-b from-[#7d7d7d] to-[#8f8f8f]" />
    </div>
    <div className="relative flex flex-col w-[220px] shrink-0 bg-[#737373] border-l border-[#838383] pl-[9px] pr-[9px] pt-[5px]">
      <Hatch className="right-0 top-0" />
      <PanelHead title="Properties" className="-ml-[3px]" />
      <div className="relative flex items-center justify-center h-[20px] mt-[11px] pl-[16px] rounded-[4px] border border-[#2e2e2e] bg-linear-to-b from-[#979797] to-[#707070] text-[#111]">
        <span className="absolute left-[3px] top-[1px]"><Plus /></span>Add Game Property
      </div>
    </div>
  </div>
);

const OutlinerHeader = () => (
  <div className="relative flex items-center h-[26px] shrink-0 border-b border-[#5c5c5c] bg-linear-to-b from-[#6c6c6c] to-[#666] pl-[9px]">
    <IconGroup className="w-[30px] pl-[5px] gap-[3px]">
      <svg width="14" height="16" viewBox="0 0 14 16"><rect x="1" y="1" width="7" height="3" fill="#f0a040" /><path d="M2 4v10M2 8h3M2 13h3" stroke="#ddd" /><rect x="6" y="7" width="7" height="2" fill="#ddd" /><rect x="6" y="12" width="7" height="2" fill="#ddd" /></svg>
      <UpDown />
    </IconGroup>
    <span className="ml-[14px] text-[#111]">View</span>
    <span className="ml-[18px] text-[#111]">Search</span>
    <Menu className="w-[118px] ml-[13px]">Visible Layers</Menu>
    <div className="flex items-center w-[109px] h-[20px] ml-[6px] pl-[3px] rounded-[4px] border border-[#2e2e2e] bg-linear-to-b from-[#8c8c8c] to-[#a8a8a8]">
      <svg width="14" height="16" viewBox="0 0 14 16"><circle cx="8" cy="6" r="4" fill="#dfe6ee" stroke="#222" /><path d="M5 9l-3 5" stroke="#a06a30" strokeWidth="2" /></svg>
    </div>
    <Hatch className="right-0 top-0" />
    <Hatch className="-left-[1px] top-0 scale-x-[-1]" />
  </div>
);

const outlinerRows = [
  ['Cone.001', 0], ['Cone.003', 1], ['Cube', 0], ['Cube.002', 1], ['Cylinder', 0, true], ['Cylinder.003', 1], ['Cylinder.001', 0], ['Cylinder.004', 1],
];

const Outliner = () => {
  const rows = Array.from({ length: 31 }).map((_, i) => outlinerRows[i] || null);
  return (
    <div className="relative flex flex-col h-[620px] overflow-hidden">
      <div className="absolute left-[6px] top-[10px] h-[120px] w-px bg-[#4d4d4d]" />
      {rows.map((r, i) => (
        <div key={i} className={`flex items-center h-[20px] shrink-0 ${i % 2 ? 'bg-[#747474]' : 'bg-[#6a6a6a]'}`}>
          <div className="relative flex items-center flex-1 h-full">
            {r && r[1] === 0 && (
              <>
                <svg className="absolute left-[3px] top-[5px]" width="8" height="9" viewBox="0 0 8 9"><circle cx="4" cy="4.5" r="3.4" fill="#e8e8e8" stroke="#222" /><path d="M2 4.5h4" stroke="#222" /></svg>
                <span className="absolute left-[11px] top-[9px] w-[14px] h-px bg-[#4d4d4d]" />
                <span className="absolute left-[22px] top-[1px]"><MeshOrange /></span>
                {r[2] && <span className="absolute left-[22px] top-0 w-[17px] h-[20px] rounded-[8px] bg-[#e8a050] opacity-50" />}
                <span className={`absolute left-[41px] top-[6px] ${r[2] ? 'text-[#f6f6f6]' : 'text-[#111]'}`}>{r[0]}</span>
              </>
            )}
            {r && r[1] === 1 && (
              <>
                <MeshData className="absolute left-[41px] top-[2px]" />
                <span className="absolute left-[61px] top-[6px] text-[#111]">{r[0]}</span>
              </>
            )}
          </div>
          <div className="flex h-full">
            {[0, 1, 2].map(c => (
              <div key={c} className="flex items-center justify-center w-[20px] h-full border-l border-[#5b5b5b]">
                {r && r[1] === 0 && (c === 0 ? <Eye /> : c === 1 ? <Cursor /> : <Cam />)}
              </div>
            ))}
          </div>
        </div>
      ))}
      <Hatch className="left-0 bottom-0" />
    </div>
  );
};

const propTabs = [
  <Cam size={15} />,
  <svg width="15" height="15" viewBox="0 0 15 15"><rect x="3" y="3" width="10" height="11" fill="#999" stroke="#222" strokeWidth="0.6" /><rect x="1" y="1" width="10" height="11" fill="#ddd" stroke="#222" strokeWidth="0.6" /><rect x="3.5" y="3.5" width="5" height="6" fill="#4a78b0" /></svg>,
  <Scene3 />,
  <svg width="15" height="15" viewBox="0 0 15 15"><circle cx="7.5" cy="7.5" r="6.4" fill="#4a7ab0" stroke="#222" strokeWidth="0.7" /><path d="M3 5l3-2 2 2-2 3 1 3-2-1z M9 8l3-1 0 3-2 1z" fill="#9ab070" /></svg>,
  <Cube size={15} />,
  <svg width="16" height="15" viewBox="0 0 16 15"><ellipse cx="5.5" cy="10" rx="3.6" ry="2.6" transform="rotate(-45 5.5 10)" fill="none" stroke="#d8d8d8" strokeWidth="1.6" /><ellipse cx="10.5" cy="5" rx="3.6" ry="2.6" transform="rotate(-45 10.5 5)" fill="none" stroke="#d8d8d8" strokeWidth="1.6" /></svg>,
  <svg width="15" height="15" viewBox="0 0 15 15"><path d="M2 13.5L9 6.5" stroke="#9ab8e0" strokeWidth="2.6" /><path d="M13.5 3.5a3.5 3.5 0 1 1-3-2l-1 2 1.5 1.5z" fill="#9ab8e0" /></svg>,
  <MeshData />,
  <svg width="15" height="15" viewBox="0 0 15 15"><circle cx="7.5" cy="7.5" r="6" fill="#8a8482" stroke="#222" strokeWidth="0.6" /><path d="M7.5 1.5a6 6 0 0 0 0 12z" fill="#5c5655" /></svg>,
  <svg width="15" height="15" viewBox="0 0 15 15"><rect x="1.5" y="1.5" width="12" height="12" fill="#ddd" />{[[1.5, 1.5], [6.5, 1.5], [11.5, 1.5], [4, 4], [9, 4], [1.5, 6.5], [6.5, 6.5], [11.5, 6.5], [4, 9], [9, 9], [1.5, 11.5], [6.5, 11.5], [11.5, 11.5]].map(([x, y]) => <rect key={x + '' + y} x={x} y={y} width="2.5" height="2.5" fill="#8a3535" />)}</svg>,
  <svg width="16" height="16" viewBox="0 0 16 16" stroke="#e0d090" strokeWidth="1.1"><path d="M4 1v6M1 4h6M12 1v6M9 4h6M4 9v6M1 12h6M12 9v6M9 12h6" /></svg>,
  <svg width="16" height="16" viewBox="0 0 16 16"><path d="M2 7l5 6 6-8" fill="none" stroke="#1a3c78" strokeWidth="2.4" /><circle cx="11" cy="4" r="3.2" fill="#f4f4f4" stroke="#222" strokeWidth="0.5" /><path d="M4 14h8" stroke="#1a3c78" strokeWidth="1.6" /></svg>,
];

const Slider = ({ label, value, fill }) => (
  <div className="relative flex items-center flex-1 px-[14px] border-b border-[#2e2e2e] last:border-b-0 bg-linear-to-b from-[#979797] to-[#b0b0b0] text-[#111]">
    <span className={`absolute left-0 top-0 bottom-0 bg-linear-to-b from-[#636363] to-[#727272] ${fill}`} />
    <span className="relative">{label}</span><span className="relative ml-auto">{value}</span>
  </div>
);

const CollisionGrid = ({ dark }) => (
  <div className="grid grid-cols-8 grid-rows-2 h-[30px] rounded-[4px] border border-[#2e2e2e] overflow-hidden bg-[#2e2e2e] gap-px">
    {Array.from({ length: 16 }).map((_, i) => (
      <span key={i} className={dark || i === 0 ? 'bg-[#5c5c5c]' : 'bg-[#929292]'} />
    ))}
  </div>
);

const Properties = () => (
  <div className="relative flex flex-col flex-1 min-h-0 border-t-[2px] border-[#141414] bg-[#727272]">
    <div className="relative flex items-center h-[25px] shrink-0 border-b border-[#5c5c5c] bg-linear-to-b from-[#6c6c6c] to-[#666] pl-[9px]">
      <IconGroup className="w-[30px] pl-[4px] gap-[2px]">
        <svg width="15" height="14" viewBox="0 0 15 14"><rect x="1" y="1" width="13" height="5" rx="1" fill="#e4e4e4" stroke="#222" strokeWidth="0.6" /><rect x="1" y="8" width="13" height="5" rx="1" fill="#e4e4e4" stroke="#222" strokeWidth="0.6" /></svg>
        <UpDown />
      </IconGroup>
      <div className="flex ml-[8px] h-[20px] rounded-[4px] border border-[#262626] overflow-hidden">
        {propTabs.map((ic, i) => (
          <span key={i} className={`flex items-center justify-center w-[20px] border-r border-[#2c2c2c] last:border-r-0 ${i === 11 ? 'bg-[#5680c2]' : 'bg-linear-to-b from-[#4e4e4e] to-[#383838]'}`}>{ic}</span>
        ))}
      </div>
      <Hatch className="right-0 top-0" />
    </div>
    <div className="relative flex flex-col flex-1 pl-[8px] pr-[26px]">
      <div className="relative h-[6px] shrink-0 overflow-hidden">
        <span className="absolute left-[92px] -top-[7px] text-[#111] flex items-center gap-[4px]"><Cube size={13} className="-ml-[14px]" />Cylinder</span>
        <span className="absolute left-[36px] -top-[9px]"><Scene3 /></span>
        <svg className="absolute left-[8px] -top-[8px]" width="14" height="14" viewBox="0 0 14 14"><path d="M2 12L11 3M6 3h5v5" stroke="#ddd" fill="none" strokeWidth="2" /></svg>
      </div>
      <Sep className="mt-[9px] mr-[-8px]" />
      <PanelHead title="Physics" className="mt-[4px] mr-[-5px] pr-0" />
      <div className="flex items-center justify-between mt-[11px] h-[20px] ml-[7px]">
        <span className="text-[#161616]">Physics Type:</span>
        <Menu className="w-[543px]">Rigid Body</Menu>
      </div>
      <div className="grid grid-cols-[404px_404px] gap-x-[9px] mt-[19px]">
        <div className="flex flex-col">
          <CheckRow on white gap="gap-[6px]" className="ml-[4px]">Actor</CheckRow>
          <CheckRow gap="gap-[6px]" className="mt-[8px] ml-[4px]">Ghost</CheckRow>
          <div className="relative flex items-center justify-center h-[20px] mt-[5px] pl-[14px] rounded-[4px] border border-[#2e2e2e] bg-[#929292] text-[#111]">
            <span className="absolute left-[3px] top-[2px]"><Cam size={13} /></span>Invisible
          </div>
          <Label className="mt-[20px] ml-[7px]">Attributes:</Label>
          {[['Mass:', '5.000'], ['Radius:', '1.000'], ['Form Factor:', '0.400']].map((r, i) => (
            <NumGroup key={r[0]} className={i === 0 ? 'mt-[4px]' : 'mt-[2px]'} h="h-[20px]" rows={[r]} />
          ))}
          <Label className="mt-[8px] ml-[7px]">Velocity:</Label>
          <NumGroup className="mt-[5px]" h="h-[39px]" rows={[['Minimum:', '0.000'], ['Maximum:', '0.000']]} />
          <Label className="mt-[20px] ml-[7px]">Lock Translation:</Label>
          <CheckRow on gap="gap-[6px]" className="mt-[8px] ml-[4px]">X</CheckRow>
          <CheckRow on gap="gap-[6px]" className="mt-[8px] ml-[4px]">Y</CheckRow>
          <CheckRow on gap="gap-[6px]" className="mt-[8px] ml-[4px]">Z</CheckRow>
        </div>
        <div className="flex flex-col">
          <CheckRow className="ml-[3px]">Use Material Force Field</CheckRow>
          <CheckRow className="mt-[8px] ml-[3px]">Rotate From Normal</CheckRow>
          <CheckRow on white className="mt-[8px] ml-[3px]">No Sleeping</CheckRow>
          <CheckRow className="mt-[22px] ml-[3px]">Anisotropic Friction</CheckRow>
          <NumGroup disabled className="mt-[5px]" rows={[['X:', '1.000'], ['Y:', '1.000'], ['Z:', '1.000']]} />
          <Label className="mt-[12px] ml-[8px]">Damping:</Label>
          <div className="flex flex-col h-[39px] mt-[5px] rounded-[9px] border border-[#2e2e2e] overflow-hidden">
            <Slider label="Translation:" value="0.040" fill="w-[22px]" />
            <Slider label="Rotation:" value="0.100" fill="w-[48px]" />
          </div>
          <Label className="mt-[20px] ml-[8px]">Lock Rotation:</Label>
          <CheckRow className="mt-[8px] ml-[3px]">X</CheckRow>
          <CheckRow className="mt-[8px] ml-[3px]">Y</CheckRow>
          <CheckRow className="mt-[8px] ml-[3px]">Z</CheckRow>
        </div>
      </div>
      <Sep className="mt-[9px] mr-[-8px]" />
      <PanelHead title="Collision Bounds" check on className="mt-[4px] mr-[-5px] pr-0" />
      <div className="flex items-center justify-between mt-[11px] h-[20px] ml-[7px]">
        <span className="text-[#161616]">Bounds:</span>
        <Menu className="w-[543px]">Cylinder</Menu>
      </div>
      <div className="grid grid-cols-[404px_404px] gap-x-[9px] mt-[2px]">
        <div className="flex flex-col h-[20px] rounded-[9px] border border-[#2e2e2e] overflow-hidden">
          <Slider label="Margin:" value="0.040" fill="w-[23px]" />
        </div>
        <CheckRow className="ml-[3px] mt-[3px]">Compound</CheckRow>
      </div>
      <div className="grid grid-cols-[404px_404px] gap-x-[9px] mt-[20px]">
        <div><Label className="ml-[7px]">Collision Group:</Label><div className="mt-[4px]"><CollisionGrid /></div></div>
        <div><Label className="ml-[8px]">Collision Mask:</Label><div className="mt-[4px]"><CollisionGrid dark /></div></div>
      </div>
      <Sep className="mt-[7px] mr-[-8px]" />
      <PanelHead title="Create Obstacle" check className="mt-[4px] mr-[-5px] pr-0" />
      <NumGroup disabled className="mt-[11px] w-[404px]" h="h-[20px]" rows={[['Radius:', '1.000']]} />
      <div className="absolute right-[4px] top-[5px] bottom-[4px] w-[12px] rounded-[6px] bg-[#5e5e5e] border border-[#4c4c4c]" />
      <div className="absolute right-[4px] top-[25px] bottom-[4px] w-[12px] rounded-[6px] bg-linear-to-r from-[#7a7a7a] to-[#8c8c8c] border border-[#4c4c4c]" />
      <Hatch className="left-0 bottom-0" />
    </div>
  </div>
);

export default function App() {
  return (
    <div className="w-[2672px] h-[1471px] overflow-hidden bg-linear-to-b from-[#fbfbfb] to-[#f1f1f1] pt-[32px] pl-[55px] font-['DejaVu_Sans',sans-serif] text-[10.4px] leading-none">
      <div className="flex flex-col w-[2561px] h-[1359px] rounded-t-[5px] overflow-hidden shadow-[0_14px_40px_rgba(0,0,0,0.42)]">
        {/* mac title bar */}
        <div className="relative flex items-center justify-center h-[21px] pt-[2px] shrink-0 border-b border-[#a4a4a4] bg-linear-to-b from-[#ececec] to-[#d2d2d2]">
          <div className="absolute left-[9px] top-[5px] flex gap-[8px]">
            <span className="block w-[12px] h-[12px] rounded-full bg-[#fc615c] border border-[#e0443e]" />
            <span className="block w-[12px] h-[12px] rounded-full bg-[#fdbc40] border border-[#dea123]" />
            <span className="block w-[12px] h-[12px] rounded-full bg-[#34c84a] border border-[#1dad2b]" />
          </div>
          <span className="flex items-center gap-[6px] font-['Liberation_Sans',sans-serif] text-[14px] text-[#4a4a4a]">
            <svg width="13" height="16" viewBox="0 0 13 16"><path d="M1 .5h8l3.5 3.5v11.5H1z" fill="#f8f8f8" stroke="#aaa" /><circle cx="6.5" cy="10" r="2.6" fill="none" stroke="#e8902a" strokeWidth="1.4" /></svg>
            wheel.blend
          </span>
        </div>
        <InfoHeader />
        <div className="flex flex-1 min-h-0">
          {/* left side: 3D view and logic editor */}
          <div className="flex flex-col w-[1710px] shrink-0 border-r-[2px] border-[#141414]">
            <div className="flex h-[992px] shrink-0">
              <div className="flex flex-col w-[161px] shrink-0">
                <div className="flex h-[632px] shrink-0"><ToolTabs /><ToolPanel /></div>
                <div className="flex flex-1 flex-col bg-[#737373] border-t border-[#5a5a5a] border-r border-r-[#5a5a5a] pl-[10px] pr-[10px] pt-[6px]">
                  <PanelHead title="Toggle Editmode" />
                </div>
              </div>
              <div className="relative flex-1 bg-[#393939] overflow-hidden">
                <ViewportArt />
                <span className="absolute left-[19px] top-[11px] text-[#f4f4f4]">User Ortho</span>
                <span className="absolute left-[70px] bottom-[9px] text-[#f4f4f4]">(1) Cylinder</span>
              </div>
              <NPanel />
            </div>
            <ViewportHeader />
            <LogicEditor />
            <div className="flex items-center h-[26px] shrink-0 border-t border-[#555] bg-linear-to-b from-[#6e6e6e] to-[#646464] pl-[9px]">
              <IconGroup className="w-[30px] pl-[3px] gap-[2px]">
                <svg width="16" height="17" viewBox="0 0 16 17"><path d="M3 11l5-3 5 3-5 4z" fill="#bbb" stroke="#222" strokeWidth="0.6" /><path d="M8 9V4" stroke="#ddd" strokeWidth="1.6" /><circle cx="8" cy="3.5" r="2.6" fill="#d82020" /></svg>
                <UpDown />
              </IconGroup>
              <span className="ml-[10px] text-[#111]">View</span>
              <span className="ml-[13px] text-[#111]">Add</span>
            </div>
          </div>
          {/* right side: outliner over properties */}
          <div className="flex flex-col flex-1 min-w-0 bg-[#727272]">
            <OutlinerHeader />
            <Outliner />
            <Properties />
          </div>
        </div>
      </div>
    </div>
  );
}
